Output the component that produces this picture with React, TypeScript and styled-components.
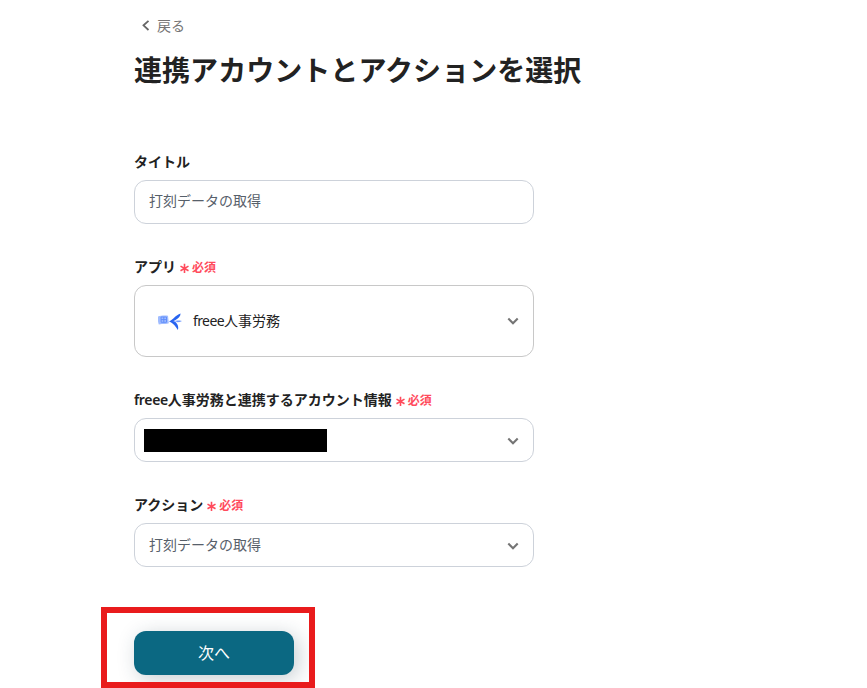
import React from "react";
import styled, { createGlobalStyle } from "styled-components";

const GlobalStyle = createGlobalStyle`
  * { box-sizing: border-box; }
  body {
    margin: 0;
    background: #fff;
    color: #222;
    font-family: "Noto Sans", "Noto Sans CJK JP", sans-serif;
    font-size: 14px;
    overflow: hidden;
  }
`;

const Page = styled.main`
  width: 867px;
  height: 688px;
  padding: 15px 0 0 134px;
  overflow: hidden;
`;

const BackLink = styled.a`
  display: flex;
  align-items: center;
  gap: 7px;
  height: 21px;
  padding-left: 7px;
  color: #757575;
  line-height: 21px;
`;

const Title = styled.h1`
  margin: 13px 0 0;
  height: 42px;
  line-height: 42px;
  font-size: 28px;
  font-weight: 700;
  letter-spacing: 0.05px;
  white-space: nowrap;
`;

const Form = styled.form`
  display: flex;
  flex-direction: column;
  gap: 33px;
  width: 400px;
  margin-top: 61px;
`;

const Field = styled.div`
  display: flex;
  flex-direction: column;
  gap: 8px;
`;

const Label = styled.label`
  display: flex;
  align-items: center;
  height: 20px;
  line-height: 20px;
  font-weight: 600;
  white-space: nowrap;
`;

const Latin = styled.span<{ $tracking: number }>`
  letter-spacing: ${(p) => p.$tracking}px;
`;

const Required = styled.span`
  display: flex;
  align-items: center;
  gap: 3px;
  margin-left: 4px;
  padding-top: 1px;
  color: #ff4b5c;
  font-size: 12px;
  font-weight: 700;
`;

const Control = styled.div<{ $tall?: boolean; $muted?: boolean; $raised?: boolean }>`
  display: flex;
  align-items: center;
  height: ${(p) => (p.$tall ? 72 : 44)}px;
  padding: 0 14px ${(p) => (p.$raised ? 4 : 2)}px ${(p) => (p.$tall ? 23 : 14)}px;
  border: 1px solid ${(p) => (p.$tall ? "#c8c8c8" : "#cdd2da")};
  border-radius: 12px;
  color: ${(p) => (p.$muted ? "#57606a" : "#222")};
`;

const Redaction = styled.span`
  width: 183px;
  height: 23px;
  margin: 2px 0 0 -5px;
  background: #000;
`;

const LogoSlot = styled.span`
  display: flex;
  padding-top: 2px;
`;

const AppName = styled.span`
  margin-left: 10px;
`;

const ChevronSlot = styled.span<{ $offset: number }>`
  display: flex;
  margin: ${(p) => p.$offset}px 0 0 auto;
`;

const Submit = styled.div`
  position: relative;
  width: 160px;
  margin-top: 31px;
`;

const NextButton = styled.button`
  display: block;
  width: 160px;
  height: 44px;
  padding: 0 0 3px;
  border: 0;
  border-radius: 12px;
  background: #0b6882;
  box-shadow: 4px 4px 20px rgba(30, 60, 75, 0.25);
  color: #fff;
  font: 400 16px "Noto Sans", "Noto Sans CJK JP", sans-serif;
`;

const Highlight = styled.div`
  position: absolute;
  left: -33px;
  top: -24px;
  width: 214px;
  height: 81px;
  border: 6px solid #e91b1c;
  pointer-events: none;
`;

const Chevron = ({ offset = 3 }: { offset?: number }) => (
  <ChevronSlot $offset={offset}>
    <svg width="12" height="8" viewBox="0 0 12 8" fill="none">
      <path d="M1.3 1.6 6 6.2l4.7-4.6" stroke="#757575" strokeWidth="2.1" />
    </svg>
  </ChevronSlot>
);

const Asterisk = () => (
  <svg width="9" height="10" viewBox="0 0 9 10" fill="none">
    <path d="M4.5 .8v9.200M.5 3.100l8 4.600M8.500 3.100l-8 4.600" stroke="currentColor" strokeWidth="1.600" />
  </svg>
);

const FreeeLogo = () => (
  <LogoSlot>
    <svg width="25" height="20" viewBox="0 0 25 20">
      <path d="M-.3 5.800c1-.7 2.400-.6 3.500-1 2.200-.5 4.500-.5 6.800-.1l.8 7.600c-2.300 1-4.700.5-7 .8l-3 .3Q-.4 9.800-.3 5.800Z" fill="#a0bcff" />
      <path d="M3 6h5.500v5.300H3.200zM5.800 6v5.300M3 8.600h5.500" fill="none" stroke="#5c8bfa" strokeWidth=".9" />
      <path d="M11 10.200C15 9 17.500 3.800 22.600 2.400c-.1 3.100-2.500 5-6.300 7.600 2.700 2 4.800 5 3.600 9.100-2.200-3.500-4.500-7.100-8.900-8.900Z" fill="#2864f0" />
      <path d="M14.500 10c3-.5 6-.9 9.500 0-2.700 1.600-6.200 1.800-9.500 0Z" fill="#6f99ff" />
      <path d="m20.500 7.900-4 2 3 1.800" fill="none" stroke="#fff" strokeWidth=".5" />
    </svg>
  </LogoSlot>
);

const FieldLabel = ({ latin, text, required }: { latin?: string; text: string; required?: boolean }) => (
  <Label>
    {latin && <Latin $tracking={-0.35}>{latin}</Latin>}
    {text}
    {required && (
      <Required>
        <Asterisk />
        必須
      </Required>
    )}
  </Label>
);

export default function App() {
  return (
    <>
      <GlobalStyle />
      <Page lang="ja">
        <BackLink>
          <svg width="9" height="12" viewBox="0 0 9 12" fill="none">
            <path d="M7.500 .8 2.500 5.300l5 4.700" stroke="#666" strokeWidth="1.800" />
          </svg>
          戻る
        </BackLink>
        <Title>連携アカウントとアクションを選択</Title>
        <Form>
          <Field>
            <FieldLabel text="タイトル" />
            <Control $muted $raised>打刻データの取得</Control>
          </Field>
          <Field>
            <FieldLabel text="アプリ" required />
            <Control $tall>
              <FreeeLogo />
              <AppName>
                <Latin $tracking={-0.6}>freee</Latin>人事労務
              </AppName>
              <Chevron offset={2} />
            </Control>
          </Field>
          <Field>
            <FieldLabel latin="freee" text="人事労務と連携するアカウント情報" required />
            <Control>
              <Redaction />
              <Chevron />
            </Control>
          </Field>
          <Field>
            <FieldLabel text="アクション" required />
            <Control $muted>
              打刻データの取得
              <Chevron />
            </Control>
          </Field>
          <Submit>
            <NextButton type="button">次へ</NextButton>
            <Highlight />
          </Submit>
        </Form>
      </Page>
    </>
  );
}
